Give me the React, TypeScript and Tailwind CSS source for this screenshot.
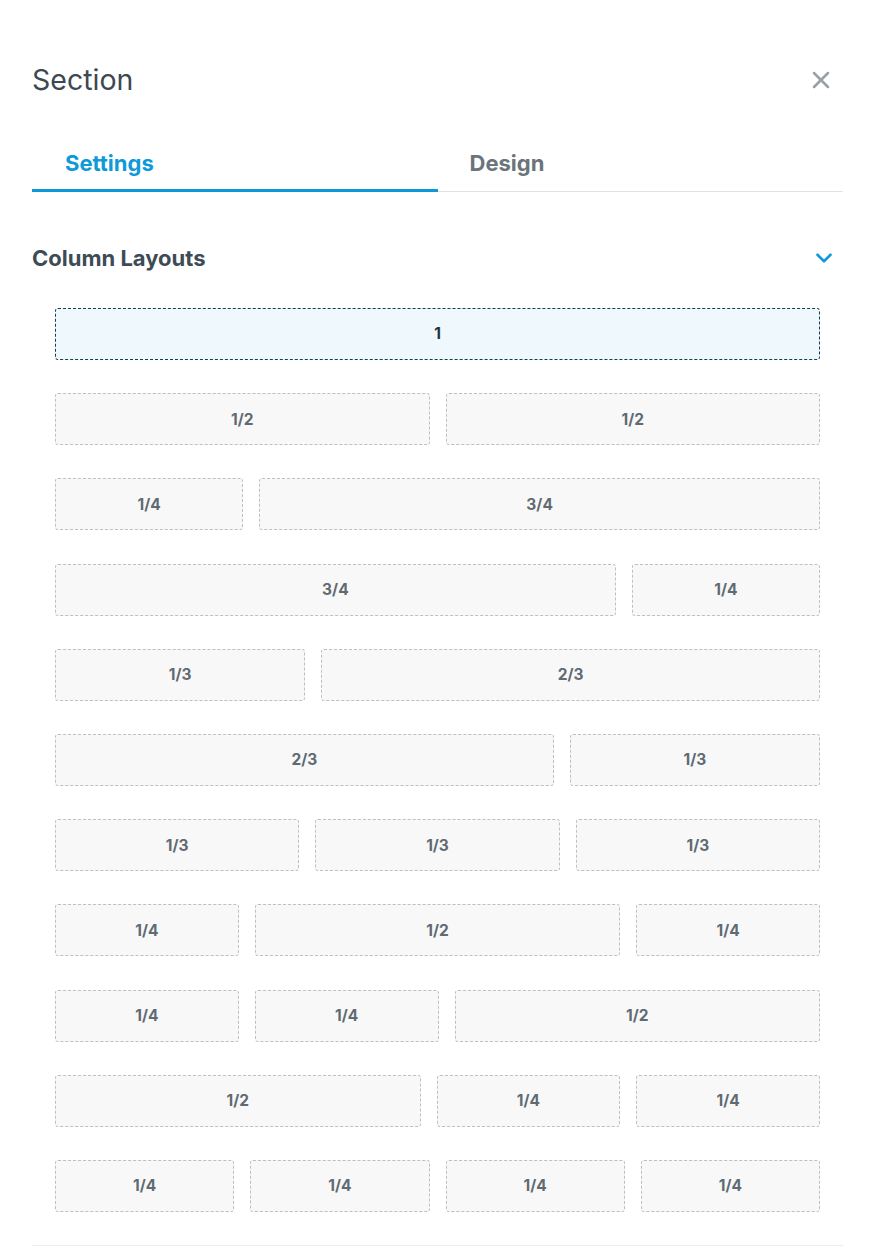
import { X, ChevronDown } from 'lucide-react';

// each layout is a list of column fractions; grow values are the fraction * 12
const layouts: { label: string; grow: number }[][] = [
  [{ label: '1', grow: 12 }],
  [{ label: '1/2', grow: 6 }, { label: '1/2', grow: 6 }],
  [{ label: '1/4', grow: 3 }, { label: '3/4', grow: 9 }],
  [{ label: '3/4', grow: 9 }, { label: '1/4', grow: 3 }],
  [{ label: '1/3', grow: 4 }, { label: '2/3', grow: 8 }],
  [{ label: '2/3', grow: 8 }, { label: '1/3', grow: 4 }],
  [{ label: '1/3', grow: 4 }, { label: '1/3', grow: 4 }, { label: '1/3', grow: 4 }],
  [{ label: '1/4', grow: 3 }, { label: '1/2', grow: 6 }, { label: '1/4', grow: 3 }],
  [{ label: '1/4', grow: 3 }, { label: '1/4', grow: 3 }, { label: '1/2', grow: 6 }],
  [{ label: '1/2', grow: 6 }, { label: '1/4', grow: 3 }, { label: '1/4', grow: 3 }],
  [{ label: '1/4', grow: 3 }, { label: '1/4', grow: 3 }, { label: '1/4', grow: 3 }, { label: '1/4', grow: 3 }],
];

const LayoutRow = ({ cols, selected }: { cols: { label: string; grow: number }[]; selected: boolean }) => (
  <div className="flex gap-4 h-[52px]">
    {cols.map((col, i) => (
      <button
        key={i}
        style={{ flex: `${col.grow} 1 0%` }}
        className={
          selected
            ? 'flex items-center justify-center rounded-[3px] border border-dashed border-[#163d52] bg-[#eef8fd] text-[15.5px] font-bold text-[#1f3340]'
            : 'flex items-center justify-center rounded-[3px] border border-dashed border-[#bcc0c3] bg-[#f8f8f8] text-[15.5px] font-bold text-[#5f6a72]'
        }
      >
        {col.label}
      </button>
    ))}
  </div>
);

const App = () => {
  return (
    <div className="min-h-screen bg-white" style={{ fontFamily: 'Inter, "Noto Sans", sans-serif' }}>
      <div className="ml-8 w-[811px] pt-[62px]">
        <div className="flex h-9 items-center justify-between pr-[8px]">
          <h1 className="text-[28.5px] font-normal leading-9 text-[#3c4852]">Section</h1>
          <X size={28} strokeWidth={2.2} className="text-[#9aa0a5]" />
        </div>

        <div className="mt-[38px] flex border-b border-[#dfe1e3]">
          <button className="-mb-px flex h-14 w-1/2 items-center border-b-[3px] border-[#0e98d6] pl-[33px] pt-[2px] text-left text-[22px] font-bold text-[#0e9ad8]">
            Settings
          </button>
          <button className="-mb-px flex h-14 w-1/2 items-center border-b-[3px] border-transparent pl-8 pt-[2px] text-left text-[22px] font-bold text-[#6b747b]">
            Design
          </button>
        </div>

        <div className="mt-[52px] flex h-7 items-center justify-between pr-[6px]">
          <h2 className="text-[22px] font-bold leading-7 text-[#3d4b56]">Column Layouts</h2>
          <ChevronDown size={26} strokeWidth={2.4} className="text-[#0e9ad8]" />
        </div>

        <div className="mt-9 flex flex-col gap-[33.2px] px-[23px]">
          {layouts.map((cols, i) => (
            <LayoutRow key={i} cols={cols} selected={i === 0} />
          ))}
        </div>

        <div className="mt-[33px] border-t border-[#ececec]" />
      </div>
    </div>
  );
};

export default App;
